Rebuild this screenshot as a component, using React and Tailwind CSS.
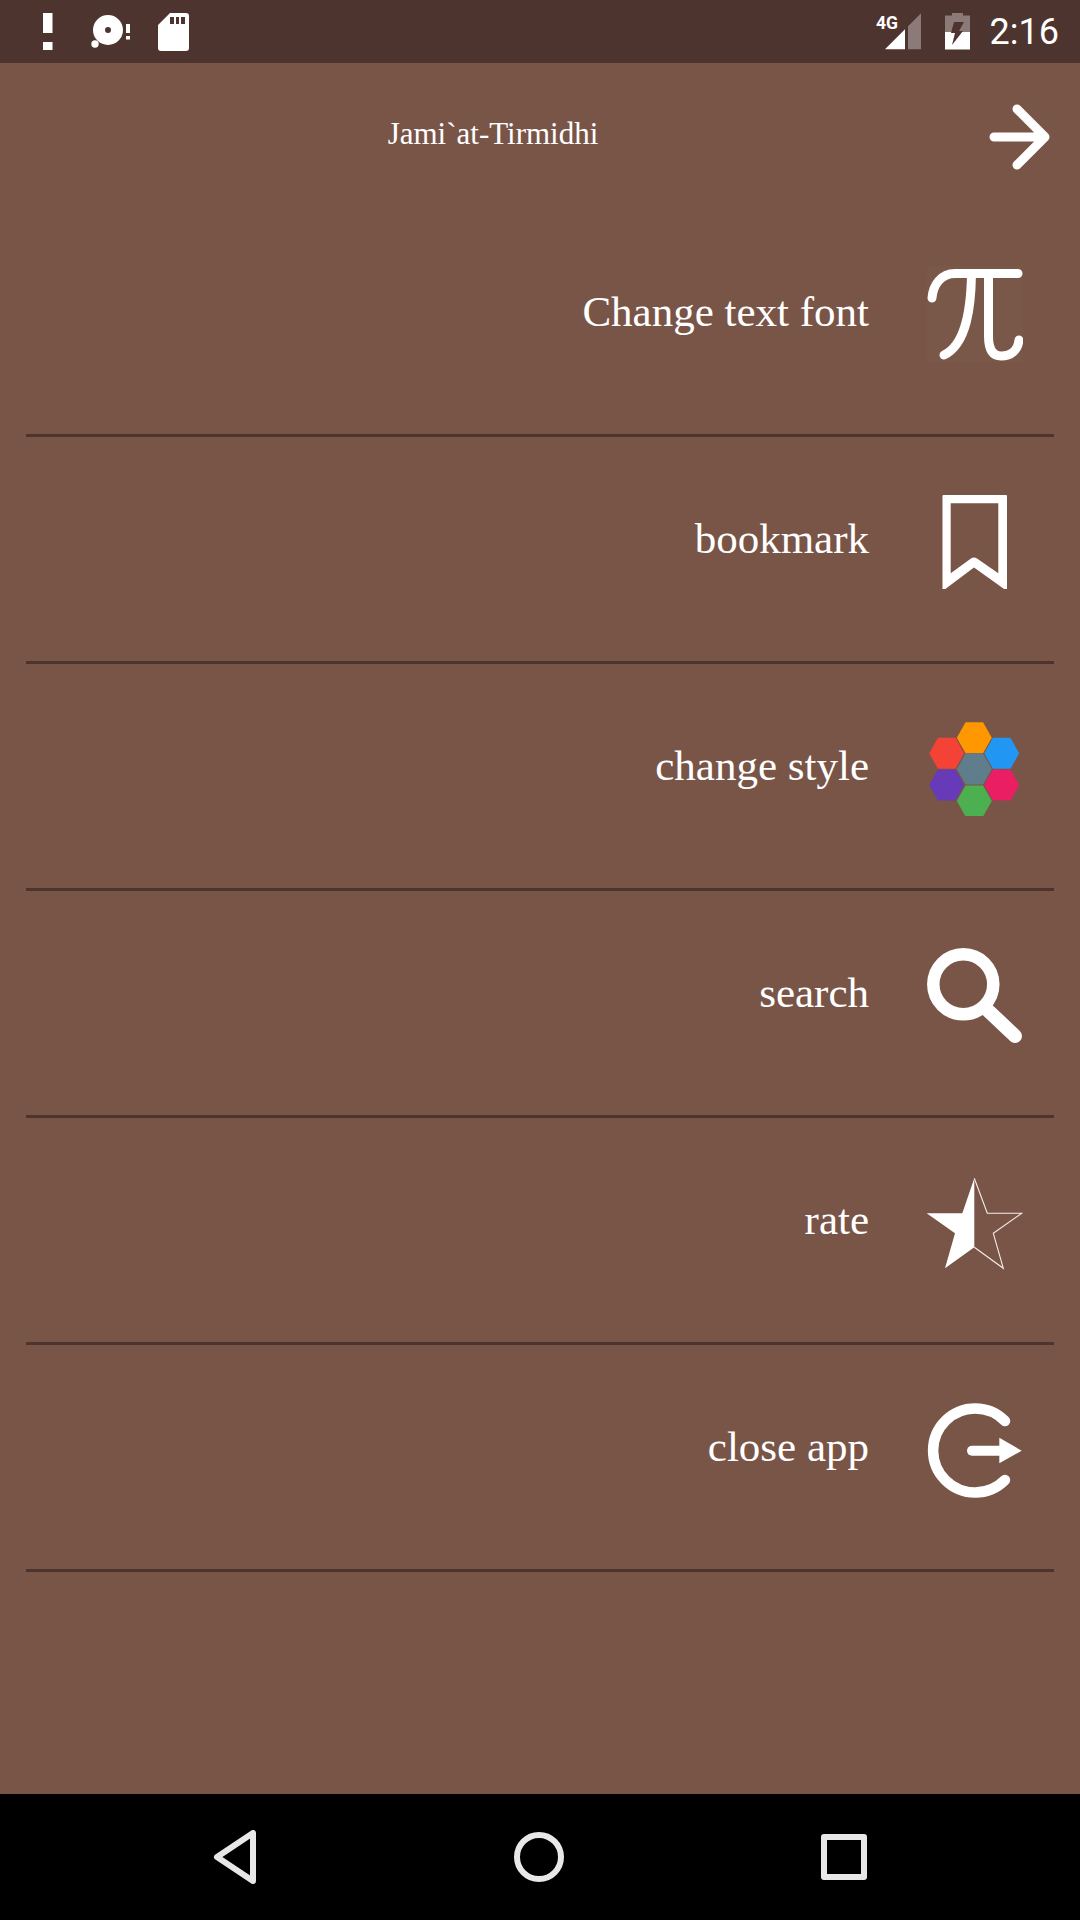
const menu = [
  { label: "Change text font", icon: <PiIcon /> },
  { label: "bookmark", icon: <BookmarkIcon /> },
  { label: "change style", icon: <HexIcon /> },
  { label: "search", icon: <SearchIcon /> },
  { label: "rate", icon: <StarIcon /> },
  { label: "close app", icon: <ExitIcon /> },
]

function hexPoints(cx, cy) {
  const w = 17.5
  const h = 15.5
  return [
    [cx - w, cy],
    [cx - w / 2, cy - h],
    [cx + w / 2, cy - h],
    [cx + w, cy],
    [cx + w / 2, cy + h],
    [cx - w / 2, cy + h],
  ]
    .map((p) => p.join(","))
    .join(" ")
}

function PiIcon() {
  return (
    <svg viewBox="0 0 96 96" className="h-24 w-24 bg-[#7a5849]" fill="none" stroke="#fff" strokeWidth="9" strokeLinecap="round">
      <path d="M91 7.500H28C14 7.500 6 19 5 32" />
      <path d="M44.500 8C44 40 40 78 17 89" />
      <path d="M61.500 8V70C61.500 84 66 90 74 90C84 90 91 84 92 74" />
    </svg>
  )
}

function BookmarkIcon() {
  return (
    <svg viewBox="0 0 96 96" className="h-24 w-24" fill="#fff" fillRule="evenodd">
      <path d="M16.500 2H79A1 1 0 0 1 80 3V96L78.500 97L47 74.500L17 97L15.500 96V3A1 1 0 0 1 16.500 2ZM23.700 10.300V80.300L44 65.500Q47 63.500 50 65.500L71.300 80.300V10.300Z" />
    </svg>
  )
}

function HexIcon() {
  const cells = [
    [47.3, 17.7, "#ff9800"],
    [19.7, 33.3, "#f44336"],
    [74.7, 33.3, "#2196f3"],
    [19.7, 65, "#673ab7"],
    [74.7, 65, "#e91e63"],
    [47.3, 81, "#4caf50"],
    [47.3, 49, "#607d8b"],
  ]
  return (
    <svg viewBox="0 0 96 96" className="h-24 w-24">
      {cells.map(([x, y, color]) => (
        <polygon key={color} points={hexPoints(x, y)} fill={color} />
      ))}
    </svg>
  )
}

function SearchIcon() {
  return (
    <svg viewBox="0 0 96 96" className="h-24 w-24" fill="none" stroke="#fff" strokeLinecap="round">
      <circle cx="36.300" cy="37.300" r="30" strokeWidth="12.500" />
      <path d="M60 62.500L88 89" strokeWidth="14" />
    </svg>
  )
}

function StarIcon() {
  return (
    <svg viewBox="0 0 96 96" className="h-24 w-24">
      <path d="M47.300 4.300L35.300 39.300H-0.300L28 59.300L18 94.300L47.300 73.300Z" fill="#fff" />
      <path d="M47.300 4.300L60.300 39.300H94.700L66.300 59.300L76.300 94.300L47.300 73.300" fill="none" stroke="#f5ece8" strokeWidth="1.100" />
    </svg>
  )
}

function ExitIcon() {
  return (
    <svg viewBox="0 0 96 96" className="h-24 w-24 overflow-visible" fill="none" stroke="#fff" strokeLinecap="round">
      <path d="M78 20A42 42 0 1 0 78 79" strokeWidth="10.500" />
      <path d="M45 49.700H74" strokeWidth="10" />
      <path d="M72.300 36.700L94.700 49.700L72.300 62.300Z" fill="#fff" stroke="none" />
    </svg>
  )
}

function StatusLeft() {
  return (
    <svg width="200" height="63" viewBox="0 0 200 63" fill="#fff">
      <rect x="43" y="13" width="9.500" height="20" />
      <rect x="43" y="42" width="9.500" height="8" />
      <path fillRule="evenodd" d="M108 15A15 15 0 1 1 108 45A15 15 0 1 1 108 15ZM108 27A3 3 0 1 0 108 33A3 3 0 1 0 108 27Z" />
      <circle cx="95" cy="44" r="3.700" />
      <rect x="126" y="24" width="4" height="9" />
      <rect x="126" y="36" width="4" height="3.500" />
      <path fillRule="evenodd" d="M170 13H186Q189 13 189 16V48Q189 51 186 51H161Q158 51 158 48V25ZM170 17V24H174V17ZM176 17V24H179V17ZM181 17V24H185V17Z" />
    </svg>
  )
}

function SignalIcon() {
  return (
    <svg width="55" height="63" viewBox="876 0 55 63" className="shrink-0">
      <path d="M908 26.300L921 13.300V49.300H908Z" fill="#fff" fillOpacity="0.35" />
      <path d="M885 49.300L905 29.300V49.300Z" fill="#fff" />
      <text x="876" y="29" fill="#fff" fontFamily="Roboto, sans-serif" fontWeight="700" fontSize="19" textLength="22" lengthAdjust="spacingAndGlyphs">4G</text>
    </svg>
  )
}

function BatteryIcon() {
  return (
    <svg width="25" height="63" viewBox="943 0 25 63" className="shrink-0">
      <path d="M950 13H961V15.500H968V32H943V15.500H950Z" fill="#fff" fillOpacity="0.35" />
      <path d="M943 32H968V49.500H943Z" fill="#fff" />
      <path d="M952 22H962L957 31H961L950 45L953 33H949Z" fill="#4e342e" />
    </svg>
  )
}

function NavBar() {
  return (
    <div className="flex h-[126px] shrink-0 items-center justify-between bg-black pb-[1px] pl-[212px] pr-[213px]">
      <svg width="45" height="54" viewBox="0 0 45 54" fill="none" stroke="#e8e8e8" strokeWidth="6" strokeLinejoin="round">
        <path d="M5 27L41 3V51Z" />
      </svg>
      <svg width="52" height="52" viewBox="0 0 52 52" fill="none" stroke="#e8e8e8" strokeWidth="6">
        <circle cx="26" cy="26" r="22" />
      </svg>
      <svg width="46" height="46" viewBox="0 0 46 46" fill="none" stroke="#e8e8e8" strokeWidth="6" strokeLinejoin="round">
        <rect x="3" y="3" width="40" height="40" />
      </svg>
    </div>
  )
}

export default function App() {
  return (
    <div className="flex h-[1920px] w-[1080px] flex-col bg-[#795548] font-['Liberation_Serif',serif] text-white">
      <div className="flex h-[63px] shrink-0 items-center bg-[#4e342e]">
        <StatusLeft />
        <div className="ml-auto flex items-center pr-[21px]">
          <SignalIcon />
          <div className="ml-[14px]">
            <BatteryIcon />
          </div>
          <span className="ml-[20px] font-['Roboto',sans-serif] text-[36px] leading-none">2:16</span>
        </div>
      </div>

      <div className="flex h-[147px] shrink-0 items-center">
        <div className="flex-1 pb-[7px] text-center text-[31px] leading-none">Jami`at-Tirmidhi</div>
        <div className="w-[94px] shrink-0 pl-[3px]">
          <svg width="62" height="66" viewBox="0 0 62 66" fill="none" stroke="#fff" strokeWidth="9" strokeLinecap="round" strokeLinejoin="round">
            <path d="M5 33H56M28 5L56 33L28 61" />
          </svg>
        </div>
      </div>

      <div className="flex-1 px-[26px]">
        {menu.map((item) => (
          <div key={item.label} className="flex h-[227px] items-center justify-end border-b-[3px] border-[#4e342e] pb-[17px] pr-[31px]">
            <span className="pb-[4px] text-[43px] leading-none">{item.label}</span>
            <div className="ml-[58px] shrink-0">{item.icon}</div>
          </div>
        ))}
      </div>

      <NavBar />
    </div>
  )
}
